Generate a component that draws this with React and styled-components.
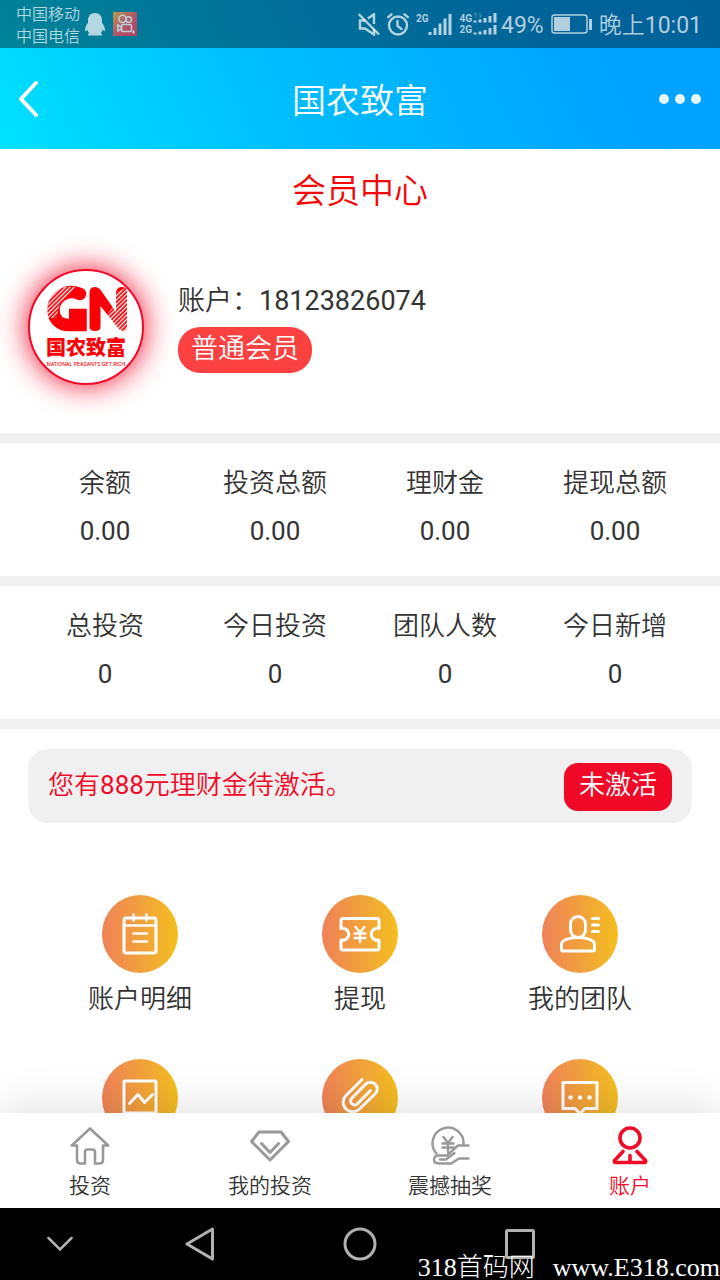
import { useState } from 'react';
import styled, { createGlobalStyle } from 'styled-components';

const GlobalStyle = createGlobalStyle`
  * {
    box-sizing: border-box;
  }
  body {
    margin: 0;
    background: #fff;
    color: #333;
    font-family: Roboto, 'Noto Sans CJK SC', sans-serif;
    font-weight: 350;
  }
  h1, h2, p, dl, dt, dd {
    margin: 0;
    font-weight: inherit;
  }
  button {
    border: 0;
    padding: 0;
    background: none;
    color: inherit;
    font: inherit;
    cursor: pointer;
  }
  svg {
    display: block;
  }
`;

const Screen = styled.div`
  position: relative;
  display: flex;
  flex-direction: column;
  height: 100vh;
  overflow: hidden;
`;

const TopArea = styled.header`
  flex: none;
  background: linear-gradient(65deg, #00e1ff, #00c0ff 35%, #00a5ff 78%, #00a2ff);
  color: #fff;
`;

/* status bar */
const StatusBar = styled.div`
  display: flex;
  align-items: center;
  justify-content: space-between;
  height: 48px;
  padding: 0 18px 0 16px;
  background: rgba(0, 0, 0, 0.4);
  color: rgba(255, 255, 255, 0.7);
`;

const StatusGroup = styled.div`
  display: flex;
  align-items: center;
  gap: ${(props) => props.$gap}px;
`;

const Carriers = styled.div`
  padding-top: 3px;
  font-size: 16px;
  line-height: 22px;
`;

const NetType = styled.div`
  height: ${(props) => (props.$single ? '22px' : 'auto')};
  font-size: 10px;
  font-weight: 700;
  line-height: 11px;
`;

const StatusText = styled.span`
  padding-top: 4px;
  font-size: 23px;
  font-weight: ${(props) => (props.$number ? 400 : 350)};
  line-height: 32px;
`;

/* title bar */
const TitleBar = styled.div`
  display: grid;
  grid-template-columns: 80px 1fr 80px;
  align-items: center;
  height: 101px;
  padding: 0 19px;
`;

const TitleText = styled.h1`
  padding-top: 5px;
  text-align: center;
  font-size: 34px;
  line-height: 48px;
`;

const BarButton = styled.button`
  display: flex;
  justify-content: ${(props) => (props.$end ? 'flex-end' : 'flex-start')};
`;

/* content */
const Content = styled.main`
  flex: 1;
  min-height: 0;
  overflow: hidden;
`;

const PageHeading = styled.h2`
  padding-top: 18px;
  text-align: center;
  color: #f60606;
  font-size: 34px;
  line-height: 48px;
`;

const Profile = styled.section`
  display: flex;
  gap: 34px;
  padding: 54px 28px 48px;
`;

const Avatar = styled.div`
  width: 116px;
  height: 116px;
  border: 2px solid #f00a28;
  border-radius: 50%;
  background: #fff;
  box-shadow: 0 0 30px #f00a28;
`;

const ProfileInfo = styled.div`
  display: flex;
  flex-direction: column;
  align-items: flex-start;
  gap: 6px;
  padding-top: 12px;
  font-size: 27px;
  line-height: 40px;
`;

const Num = styled.span`
  font-weight: 400;
`;

const Badge = styled.span`
  padding: 2px 13px 4px;
  border-radius: 22px;
  background: #fc4141;
  color: #fff;
`;

const StatRow = styled.dl`
  display: grid;
  grid-template-columns: repeat(4, 1fr);
  padding: 16px 20px 21px;
  border-top: 10px solid #f0f0f0;
  text-align: center;
  font-size: 26px;
  line-height: 48px;
`;

const StatValue = styled.dd`
  font-weight: 400;
`;

const Notice = styled.section`
  display: flex;
  align-items: center;
  justify-content: space-between;
  padding: 14px 20px 12px;
  margin: 20px 28px 72px;
  border-radius: 20px;
  background: #f0f0f0;
  color: #f00a28;
  font-size: 26px;
  line-height: 42px;
`;

const NoticeText = styled.p`
  padding-bottom: 4px;
`;

const ActivateButton = styled.button`
  padding: 1px 15px 5px;
  border-radius: 14px;
  background: #f00a28;
  color: #fff;
`;

const Divider = styled.div`
  height: 10px;
  background: #f0f0f0;
`;

const Menu = styled.nav`
  display: grid;
  grid-template-columns: repeat(3, 1fr);
  row-gap: 34px;
  padding: 0 30px;
`;

const MenuButton = styled.button`
  display: flex;
  flex-direction: column;
  align-items: center;
  font-size: 26px;
  line-height: 52px;
`;

const MenuCircle = styled.span`
  display: flex;
  align-items: center;
  justify-content: center;
  width: 76px;
  height: 78px;
  border-radius: 50%;
  background: linear-gradient(90deg, #ef8159, #f4bf1f);
  color: #fff;
`;

/* tabs */
const TabBar = styled.nav`
  position: relative;
  flex: none;
  display: grid;
  grid-template-columns: repeat(4, 1fr);
  background: #fff;
  box-shadow: 0 0 50px rgba(0, 0, 0, 0.15);
`;

const TabButton = styled.button`
  display: flex;
  flex-direction: column;
  align-items: center;
  gap: 4px;
  padding: 13px 0 6px;
  color: ${(props) => (props.$active ? '#f00a28' : '#333')};
  font-size: 21px;
  line-height: 32px;

  svg {
    color: ${(props) => (props.$active ? '#f00a28' : '#999')};
  }
`;

/* android keys */
const SystemBar = styled.div`
  flex: none;
  display: grid;
  grid-template-columns: 3fr 4fr 4fr 4fr 3fr;
  align-items: center;
  height: 72px;
  background: #000;
  color: #b4b4b4;
`;

const SystemKey = styled.button`
  display: flex;
  justify-content: center;
`;

const Watermark = styled.div`
  position: absolute;
  right: 0;
  bottom: 0;
  display: flex;
  gap: 18px;
  color: #fff;
  font-family: 'Liberation Serif', 'Noto Sans CJK SC', serif;
  font-size: 26px;
  font-weight: 300;
  line-height: 24px;
`;

const Line = ({ size = 44, width = 3, children }) => (
  <svg
    width={size}
    height={size}
    viewBox={`0 0 ${size} ${size}`}
    fill="none"
    stroke="currentColor"
    strokeWidth={width}
    strokeLinecap="round"
    strokeLinejoin="round"
    aria-hidden="true"
  >
    {children}
  </svg>
);

const PenguinIcon = () => (
  <svg width="20" height="23" viewBox="0 0 20 23" fill="currentColor" aria-hidden="true">
    <path d="M10 0C14.500 0 17 3.200 17 7.200V9.800C18.800 12 20 14.700 20 17.200C20 19 18.800 18.400 17.700 16.600C17.200 18.300 16.600 19.400 15.800 20.400C17.600 21 17.500 22.600 15.800 22.600H4.200C2.500 22.600 2.400 21 4.200 20.400C3.400 19.400 2.800 18.300 2.300 16.600C1.200 18.400 0 19 0 17.200C0 14.700 1.200 12 3 9.800V7.200C3 3.200 5.500 0 10 0Z" />
  </svg>
);

const VideoAppIcon = () => (
  <svg width="24" height="24" viewBox="0 0 24 24" fill="none" stroke="#b9d3dc" strokeWidth="1.500" aria-hidden="true">
    <defs>
      <linearGradient id="videoApp" x1="0" y1="0" x2="1" y2="1">
        <stop offset="0" stopColor="#b99a48" />
        <stop offset="0.500" stopColor="#b3586a" />
        <stop offset="1" stopColor="#b53a60" />
      </linearGradient>
    </defs>
    <rect width="24" height="24" fill="url(#videoApp)" stroke="none" />
    <circle cx="9.500" cy="6.800" r="3.600" />
    <circle cx="15.700" cy="7.500" r="2.800" />
    <rect x="8.500" y="12.500" width="10" height="7" rx="1.500" />
    <path d="M8.500 15 4.800 13v6l3.700-2z" />
    <path d="M20.500 18v4M18.800 20h3.400" strokeWidth="1" />
  </svg>
);

const MuteIcon = () => (
  <svg width="22" height="23" viewBox="0 0 22 23" fill="none" stroke="currentColor" strokeWidth="2.400" aria-hidden="true">
    <path d="M.7 1 21 21.500" />
    <path d="M7.500 7.500H2v8h5l9 6V16M9.800 5.500 16 1.200V11" />
  </svg>
);

const AlarmIcon = () => (
  <svg width="22" height="23" viewBox="0 0 22 23" fill="none" stroke="currentColor" strokeWidth="2.400" strokeLinecap="round" aria-hidden="true">
    <circle cx="11" cy="12.500" r="9" />
    <path d="M10.500 8v5l4 3M1.200 4.200 4.500 1.300M20.800 4.200 17.500 1.300" />
  </svg>
);

const SignalIcon = () => (
  <svg width="24" height="23" viewBox="0 0 24 23" stroke="currentColor" strokeWidth="3" aria-hidden="true">
    <path d="M2 19v3M7 15v7M12 10.500V22M17 5.500V22M22 1v21" />
  </svg>
);

const DualSignalIcon = () => (
  <svg width="24" height="24" viewBox="0 0 24 24" stroke="currentColor" strokeWidth="3" aria-hidden="true">
    <path d="M2 8.500v2M7 7.500v3M12 6v4.500M17 4v6.500M22 1v9.500M2 20.500v2M7 19.500v3M12 18v4.500M17 16v6.500M22 13v9.500" />
    <path d="M3 .500v5M1 3l2-2.500M7 .500v5M9 3 7 5.500" strokeWidth="1" opacity="0.400" />
  </svg>
);

const BatteryIcon = () => (
  <svg width="41" height="21" viewBox="0 0 41 21" fill="none" stroke="currentColor" aria-hidden="true">
    <rect x="1" y="1" width="35" height="18" rx="2.500" strokeWidth="1.500" />
    <rect x="3" y="3" width="16" height="14" fill="currentColor" stroke="none" />
    <path d="M39.500 5v11" strokeWidth="3" />
  </svg>
);

/* GN emblem with hatched corners */
const Emblem = () => (
  <svg width="112" height="112" viewBox="0 0 112 112" role="img" aria-label="国农致富">
    <defs>
      <pattern id="hatch" width="3" height="3" patternUnits="userSpaceOnUse" patternTransform="rotate(-45)">
        <rect width="3" height="1.200" fill="#fff" />
      </pattern>
    </defs>
    <path
      d="M50 23C37 17 23.500 26 23.500 39C23.500 48 30 54 39 54H50.500V44H39"
      fill="none"
      stroke="#fb0007"
      strokeWidth="12.500"
      strokeLinecap="butt"
    />
    <circle cx="50" cy="23" r="6.200" fill="#fb0007" />
    <path
      d="M59.500 21Q60 16 65 16Q68.500 16 71 19.500L86 41V21Q87 16 92 16Q97 16 97 21V56Q97 60 93 60Q90 60 88 57L70.500 35V56Q70.500 60 65 60Q59.500 60 59.500 56Z"
      fill="#fb0007"
    />
    <path d="M17 16H46L30 33L26 47H17Z" fill="url(#hatch)" />
    <path d="M86 22 97 16V60H86L76 45L86 32Z" fill="url(#hatch)" />
    <text x="56" y="84" textAnchor="middle" fill="#fb0007" fontSize="20" fontWeight="900" fontFamily="'Noto Sans CJK SC', sans-serif">
      国农致富
    </text>
    <text x="56" y="95" textAnchor="middle" fill="#fb0007" fontSize="5" fontWeight="500" fontFamily="Inter, sans-serif">
      NATIONAL PEASANTS GET RICH
    </text>
  </svg>
);

const balanceStats = [
  { label: '余额', value: '0.00' },
  { label: '投资总额', value: '0.00' },
  { label: '理财金', value: '0.00' },
  { label: '提现总额', value: '0.00' },
];

const teamStats = [
  { label: '总投资', value: '0' },
  { label: '今日投资', value: '0' },
  { label: '团队人数', value: '0' },
  { label: '今日新增', value: '0' },
];

const menuItems = [
  {
    id: 'detail',
    label: '账户明细',
    icon: (
      <Line>
        <rect x="6" y="6" width="32" height="35" rx="2" />
        <path d="M6 13.500h32M15.500 2.500v6M28.500 2.500v6M15.500 21.500h13.500M15.500 29.500h13.500" strokeWidth="2.500" />
      </Line>
    ),
  },
  {
    id: 'withdraw',
    label: '提现',
    icon: (
      <Line>
        <path d="M5 6.500H39Q41 6.500 41 8.500V16.500A6 6 0 1 0 41 28V36Q41 38 39 38H5Q3 38 3 36V28A6 6 0 1 0 3 16.500V8.500Q3 6.500 5 6.500Z" />
        <path d="M17.500 15 22 20.500 26.500 15M16.500 21.500h11M16.500 26h11M22 21v9" strokeWidth="2.300" />
      </Line>
    ),
  },
  {
    id: 'team',
    label: '我的团队',
    icon: (
      <Line>
        <rect x="12.500" y="4.500" width="15" height="21" rx="7.500" />
        <path d="M20 25.500C27 25.500 36.500 27.500 36.500 32V37.500Q36.500 39 35 39H5Q3.500 39 3.500 37.500V32C3.500 27.500 13 25.500 20 25.500ZM34.500 6.500h6M34.500 13h6M34.500 19.500h6" />
      </Line>
    ),
  },
  {
    id: 'chart',
    icon: (
      <Line>
        <rect x="6" y="5" width="32" height="32" rx="1" />
        <path d="M11.500 27.500 20 18.500 26.500 26.500 34.500 18.500" />
      </Line>
    ),
  },
  {
    id: 'attachment',
    icon: (
      <Line>
        <path d="M24 3.500 8 19.500a9.500 9.500 0 0 0 0 13.500a9.500 9.500 0 0 0 13.500 0L37.500 17.500a6.800 6.800 0 0 0-9.600-9.600L13.500 22.500a4 4 0 0 0 5.600 5.600L32.500 14.500" />
      </Line>
    ),
  },
  {
    id: 'message',
    icon: (
      <Line>
        <path d="M5 6.500H39V32.500H27L22 37.500L17 32.500H5Z" />
        <path d="M12.500 21.500h.1M22 21.500h.1M31.500 21.500h.1" strokeWidth="4.500" />
      </Line>
    ),
  },
];

const tabItems = [
  {
    label: '投资',
    icon: (
      <Line size={40} width={2.6}>
        <path d="M20 2.500 1.800 19.500H7V34Q7 37.500 10.500 37.500H15V26Q15 23.500 17.500 23.500H22.500Q25 23.500 25 26V37.500H29.500Q33 37.500 33 34V19.500H38.200Z" />
      </Line>
    ),
  },
  {
    label: '我的投资',
    icon: (
      <Line size={40} width={3}>
        <path d="M9 6H31L38.500 15.500 20 34 1.500 15.500ZM11.500 17.500 20 26.500 28.500 17.500" />
      </Line>
    ),
  },
  {
    label: '震撼抽奖',
    icon: (
      <Line size={40} width={2.4}>
        <path d="M6.500 27.500A15.500 15.500 0 1 1 33.500 18" />
        <path d="M13.500 11 18 17 22.500 11M12.500 17.500h11M12.500 21.500h11M18 17v9" />
        <path d="M38.500 19.500H28L17 29.500H8Q4 30 4 33.500Q4 37.500 9 37.500H21L29 32.500H38.500M24.500 27 16 33.500H10" />
      </Line>
    ),
  },
  {
    label: '账户',
    icon: (
      <Line size={40} width={3.6}>
        <circle cx="20" cy="12" r="10" />
        <path d="M13 25.500 4.500 34.500Q3.500 36.500 6 36.500H34Q36.500 36.500 35.500 34.500L27 25.500M20 29.500V36" />
      </Line>
    ),
  },
];

function Stats({ items }) {
  return (
    <StatRow>
      {items.map((item) => (
        <div key={item.label}>
          <dt>{item.label}</dt>
          <StatValue>{item.value}</StatValue>
        </div>
      ))}
    </StatRow>
  );
}

const App = () => {
  const [tab, setTab] = useState(3);

  return (
    <Screen>
      <GlobalStyle />
      <TopArea>
        <StatusBar>
          <StatusGroup $gap={8}>
            <StatusGroup $gap={5}>
              <Carriers>
                <div>中国移动</div>
                <div>中国电信</div>
              </Carriers>
              <PenguinIcon />
            </StatusGroup>
            <VideoAppIcon />
          </StatusGroup>
          <StatusGroup $gap={7}>
            <MuteIcon />
            <AlarmIcon />
            <StatusGroup $gap={0}>
              <NetType $single>2G</NetType>
              <SignalIcon />
            </StatusGroup>
            <StatusGroup $gap={4}>
              <StatusGroup $gap={1}>
                <NetType>
                  <div>4G</div>
                  <div>2G</div>
                </NetType>
                <DualSignalIcon />
              </StatusGroup>
              <StatusText $number>49%</StatusText>
            </StatusGroup>
            <BatteryIcon />
            <StatusText>
              晚上<Num>10:01</Num>
            </StatusText>
          </StatusGroup>
        </StatusBar>
        <TitleBar>
          <BarButton aria-label="返回">
            <svg width="19" height="36" viewBox="0 0 19 36" fill="none" stroke="#fff" strokeWidth="4" strokeLinecap="round" strokeLinejoin="round">
              <path d="M17 2 2 18l15 16" />
            </svg>
          </BarButton>
          <TitleText>国农致富</TitleText>
          <BarButton $end aria-label="更多">
            <svg width="42" height="10" viewBox="0 0 42 10" fill="#fff" opacity="0.9">
              <circle cx="5" cy="5" r="5" />
              <circle cx="21" cy="5" r="5" />
              <circle cx="37" cy="5" r="5" />
            </svg>
          </BarButton>
        </TitleBar>
      </TopArea>

      <Content>
        <PageHeading>会员中心</PageHeading>
        <Profile>
          <Avatar>
            <Emblem />
          </Avatar>
          <ProfileInfo>
            <p>
              账户：<Num>18123826074</Num>
            </p>
            <Badge>普通会员</Badge>
          </ProfileInfo>
        </Profile>
        <Stats items={balanceStats} />
        <Stats items={teamStats} />
        <Divider />
        <Notice>
          <NoticeText>
            您有<Num>888</Num>元理财金待激活。
          </NoticeText>
          <ActivateButton>未激活</ActivateButton>
        </Notice>
        <Menu>
          {menuItems.map((item) => (
            <MenuButton key={item.id} aria-label={item.label || item.id}>
              <MenuCircle>{item.icon}</MenuCircle>
              {item.label}
            </MenuButton>
          ))}
        </Menu>
      </Content>

      <TabBar>
        {tabItems.map((item, i) => (
          <TabButton key={item.label} $active={tab === i} onClick={() => setTab(i)}>
            {item.icon}
            {item.label}
          </TabButton>
        ))}
      </TabBar>

      <SystemBar>
        <SystemKey aria-label="收起">
          <svg width="26" height="16" viewBox="0 0 26 16" fill="none" stroke="currentColor" strokeWidth="2.500" strokeLinecap="round">
            <path d="M1.500 2 13 13.500 24.500 2" />
          </svg>
        </SystemKey>
        <SystemKey aria-label="后退">
          <svg width="30" height="34" viewBox="0 0 30 34" fill="none" stroke="currentColor" strokeWidth="3" strokeLinejoin="round">
            <path d="M27.500 2v30L2 17z" />
          </svg>
        </SystemKey>
        <SystemKey aria-label="主页">
          <svg width="34" height="34" viewBox="0 0 34 34" fill="none" stroke="currentColor" strokeWidth="3">
            <circle cx="17" cy="17" r="15" />
          </svg>
        </SystemKey>
        <SystemKey aria-label="最近">
          <svg width="30" height="30" viewBox="0 0 30 30" fill="none" stroke="currentColor" strokeWidth="3">
            <rect x="1.500" y="1.500" width="27" height="27" rx="1" />
          </svg>
        </SystemKey>
      </SystemBar>
      <Watermark>
        <span>318首码网</span>
        <span>www.E318.com</span>
      </Watermark>
    </Screen>
  );
};

export default App;
